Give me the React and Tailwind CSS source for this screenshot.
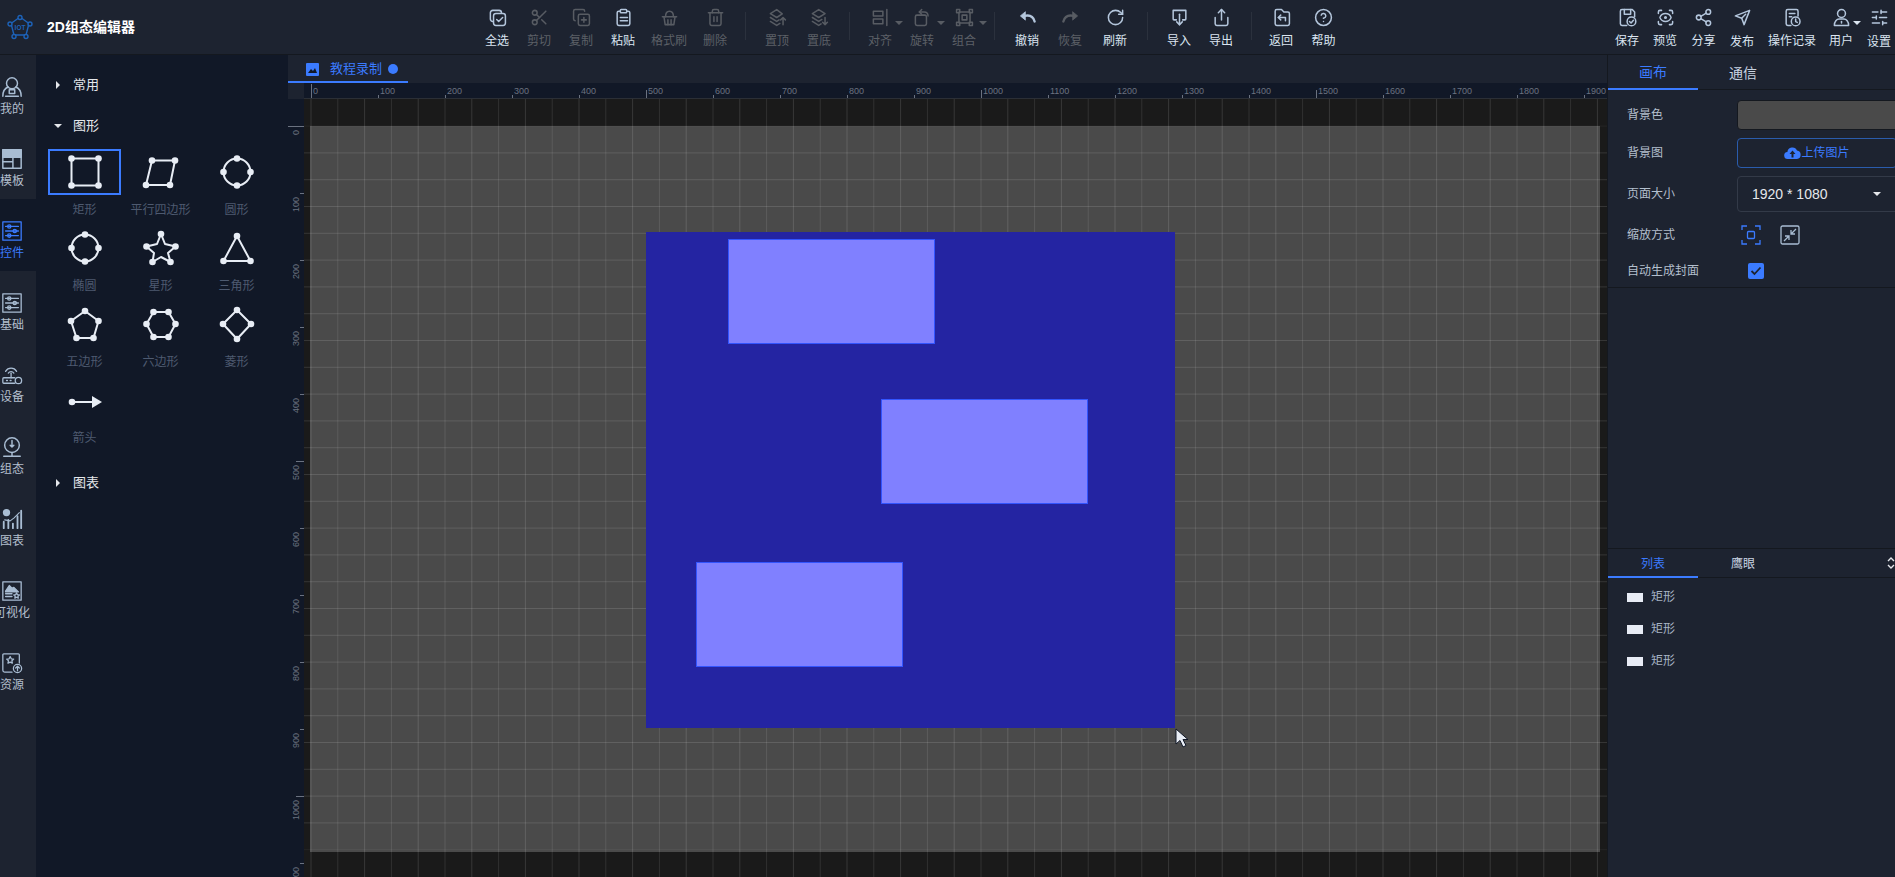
import React from "react";
import { Scissors, CopyPlus, Trash2, RotateCw, Share, CircleHelp, ScanEye, Share2, SlidersHorizontal } from "lucide-react";

const Ic = ({ children, size = 22, sw = 1.6, className = "" }) => (
  <svg width={size} height={size} viewBox="0 0 24 24" fill="none" stroke="currentColor" strokeWidth={sw} strokeLinecap="round" strokeLinejoin="round" className={className}>
    {children}
  </svg>
);
const T = ({ children, sw = 1.9 }) => <Ic size={19} sw={sw}>{children}</Ic>;

const tb = {
  all: <T><path d="M6 17a3 3 0 0 1-3-3V6a3 3 0 0 1 3-3h8a3 3 0 0 1 3 3" /><rect x="7" y="7" width="15" height="15" rx="3" /><path d="m11 14.5 2.5 2.5 5-5" /></T>,
  cut: <Scissors size={19} strokeWidth={1.9} />,
  copy: <CopyPlus size={19} strokeWidth={1.9} />,
  paste: <T><path d="M8 4H6a2 2 0 0 0-2 2v14a2 2 0 0 0 2 2h12a2 2 0 0 0 2-2V6a2 2 0 0 0-2-2h-2" /><rect x="8" y="2" width="8" height="4" rx="1" /><path d="M8 12h9M8 16h9" /></T>,
  brush: <T><path d="M3 11h18" /><path d="M5 11l1.5 10h11L19 11" /><path d="M7 11c0-5 2-7 5-7s5 2 5 7" /><path d="M10 15v6M14 15v6" /></T>,
  del: <Trash2 size={19} strokeWidth={1.9} />,
  top: <T><path d="M11 2 3 7l8 5 7-4.500z" /><path d="M3 12l8 5 3-2" /><path d="M3 17l8 5 4-2.500" /><path d="M19 21v-9m-3 3 3-3 3 3" /></T>,
  bottom: <T><path d="M11 2 3 7l8 5 8-5z" /><path d="M3 12l8 5 4-2.500" /><path d="M3 17l8 5 3-2" /><path d="M19 12v9m-3-3 3 3 3-3" /></T>,
  align: <T><rect x="3" y="4" width="12" height="6" /><rect x="3" y="14" width="12" height="6" /><path d="M20 2v20" /></T>,
  rotate: <T><rect x="3" y="9" width="14" height="13" rx="2" /><path d="M8 5h6c3 0 5 2 5 5" /><path d="m11 2-3 3 3 3" /></T>,
  group: <T><rect x="5" y="5" width="14" height="14" /><rect x="2" y="2" width="4" height="4" /><rect x="18" y="2" width="4" height="4" /><rect x="2" y="18" width="4" height="4" /><rect x="18" y="18" width="4" height="4" /><path d="M9 9h6v6H9z" /></T>,
  undo: <T sw={3}><path d="M9 5 3 10l6 5z" fill="currentColor" strokeWidth={1} /><path d="M8 10c6-1.500 11 0 13 7" /></T>,
  redo: <T sw={3}><path d="M15 5l6 5-6 5z" fill="currentColor" strokeWidth={1} /><path d="M16 10C10 8.500 5 10 3 17" /></T>,
  refresh: <RotateCw size={19} strokeWidth={1.9} />,
  imp: <T><path d="M8 15H5a1 1 0 0 1-1-1V3h16v11a1 1 0 0 1-1 1h-3" /><path d="M12 8v13" /><path d="m8.500 17.500 3.500 3.500 3.500-3.500" /></T>,
  exp: <Share size={19} strokeWidth={1.9} />,
  back: <T><path d="M6 2h6l3 3h5a2 2 0 0 1 2 2v13a2 2 0 0 1-2 2H6a2 2 0 0 1-2-2V4a2 2 0 0 1 2-2z" /><path d="m11 9-3 3 3 3" /><path d="M8 12h9v4" /></T>,
  help: <CircleHelp size={19} strokeWidth={1.9} />,
  save: <T><path d="M11 22H5a2 2 0 0 1-2-2V4a2 2 0 0 1 2-2h13l3 3v6" /><path d="M8 2v6h8V2" /><circle cx="17" cy="17" r="5.500" /><path d="m14.500 17 2 2 3-3.500" /></T>,
  view: <ScanEye size={19} strokeWidth={1.9} />,
  share: <Share2 size={19} strokeWidth={1.9} />,
  publish: <T><path d="M21 3 3 10l8 3 3 8z" /><path d="m11 13 5-5" /></T>,
  log: <T><path d="M10 22H6a2 2 0 0 1-2-2V4a2 2 0 0 1 2-2h11a2 2 0 0 1 2 2v6" /><path d="M8 7h7M8 11h3" /><circle cx="16" cy="17" r="5.500" /><path d="M16 14v3.200l2 1" /></T>,
  user: <T><circle cx="12" cy="7" r="5" /><path d="M3 22c0-5 3-8 6-8h6c3 0 6 3 6 8z" /><path d="M12 17v2" /></T>,
  set: <SlidersHorizontal size={19} strokeWidth={1.9} />,
};

const Caret = ({ className }) => (
  <span className={`absolute w-0 h-0 border-l-[4px] border-r-[4px] border-t-[4px] border-l-transparent border-r-transparent ${className}`} />
);

function Tool({ icon, label, w = "w-[42px]", on = true, caret, lower }) {
  return (
    <div className={`relative flex flex-col items-center shrink-0 pt-[6px] ${w} ${on ? "text-[#b4c6dc]" : "text-[#585c63]"}`}>
      <div className="h-[22px] flex items-center justify-center">{icon}</div>
      <div className={`whitespace-nowrap text-[12px] leading-[16px] mt-[5px] ${lower ? "translate-y-[1px]" : ""} ${on ? "text-[#dbe5f0]" : "text-[#5c6067]"}`}>{label}</div>
      {caret && <Caret className={`top-[21px] right-[-2px] ${on ? "border-t-[#dbe5f0]" : "border-t-[#585c63]"}`} />}
    </div>
  );
}

const Sep = ({ ml, mr }) => <div className={`w-px h-[28px] mt-[12px] bg-[#2b313d] shrink-0 ${ml} ${mr}`} />;

function Logo() {
  return (
    <svg width="26" height="26" viewBox="0 0 26 26" fill="none" stroke="#1d62b8" strokeWidth="1.4">
      <path d="M13 3 22 9.500 19 21H7L4 9.500z" />
      <circle cx="13" cy="3.500" r="2" fill="#1d2330" />
      <circle cx="3" cy="10" r="2" fill="#1d2330" />
      <circle cx="23" cy="10" r="2" fill="#1d2330" />
      <circle cx="7" cy="22.500" r="2" fill="#1d2330" />
      <circle cx="19" cy="22.500" r="2" fill="#1d2330" />
      <text x="13" y="15.500" textAnchor="middle" fontSize="6.500" fontWeight="700" fill="#1d62b8" stroke="none" fontFamily="Liberation Sans">IOT</text>
    </svg>
  );
}

function Header() {
  return (
    <header className="h-[55px] shrink-0 flex bg-[#1d2330] border-b border-[#14181f] overflow-hidden">
      <div className="w-[476px] shrink-0 flex items-center pl-[7px]">
        <Logo />
        <span className="ml-[14px] text-[14px] font-bold text-white">2D组态编辑器</span>
      </div>
      <Tool icon={tb.all} label="全选" />
      <Tool icon={tb.cut} label="剪切" on={false} />
      <Tool icon={tb.copy} label="复制" on={false} />
      <Tool icon={tb.paste} label="粘贴" />
      <Tool icon={tb.brush} label="格式刷" on={false} w="w-[50px]" />
      <Tool icon={tb.del} label="删除" on={false} w="w-[42px]" />
      <Sep ml="ml-[9px]" mr="mr-[10px]" />
      <Tool icon={tb.top} label="置顶" on={false} />
      <Tool icon={tb.bottom} label="置底" on={false} />
      <Sep ml="ml-[9px]" mr="mr-[9px]" />
      <Tool icon={tb.align} label="对齐" on={false} caret />
      <Tool icon={tb.rotate} label="旋转" on={false} caret />
      <Tool icon={tb.group} label="组合" on={false} caret />
      <Sep ml="ml-[9px]" mr="mr-[11px]" />
      <Tool icon={tb.undo} label="撤销" />
      <Tool icon={tb.redo} label="恢复" on={false} w="w-[44px]" />
      <Tool icon={tb.refresh} label="刷新" w="w-[46px]" />
      <Sep ml="ml-[9px]" mr="mr-[10px]" />
      <Tool icon={tb.imp} label="导入" />
      <Tool icon={tb.exp} label="导出" />
      <Sep ml="ml-[9px]" mr="mr-[8px]" />
      <Tool icon={tb.back} label="返回" />
      <Tool icon={tb.help} label="帮助" w="w-[43px]" />
      <div className="w-[263px] shrink-0" />
      <Tool icon={tb.save} label="保存" w="w-[38px]" />
      <Tool icon={tb.view} label="预览" w="w-[38px]" />
      <Tool icon={tb.share} label="分享" w="w-[39px]" />
      <Tool icon={tb.publish} label="发布" w="w-[38px]" lower />
      <Tool icon={tb.log} label="操作记录" w="w-[62px]" />
      <Tool icon={tb.user} label="用户" w="w-[36px]" caret />
      <Tool icon={tb.set} label="设置" w="w-[40px]" lower />
    </header>
  );
}

const nav = [
  ["我的", <Ic><circle cx="12" cy="8" r="6" /><path d="M2 22c0-6 3-9 6-10M22 22c0-6-3-9-6-10" /><path d="M5 22h14" /><rect x="9" y="15" width="6" height="4" /></Ic>],
  ["模板", <Ic><rect x="2" y="2" width="20" height="8" fill="currentColor" /><rect x="2" y="2" width="20" height="20" /><path d="M13 10v12M2 15h11" /></Ic>],
  ["控件", <Ic sw={1.4}><rect x="2" y="2" width="20" height="20" /><path d="M5 7h14M5 12h14M5 17h14" /><circle cx="9" cy="7" r="1.800" /><circle cx="15" cy="12" r="1.800" /><circle cx="9" cy="17" r="1.800" /></Ic>],
  ["基础", <Ic sw={1.4}><rect x="2" y="2" width="20" height="20" /><path d="M5 7h14M5 12h14M5 17h14" /><circle cx="9" cy="7" r="1.800" /><circle cx="15" cy="12" r="1.800" /><circle cx="9" cy="17" r="1.800" /></Ic>],
  ["设备", <Ic sw={1.4}><path d="M5 8a7 7 0 0 1 12 0M8 10a3.500 3.500 0 0 1 6 0" /><path d="M11 10v5" /><path d="M15 21H3a1 1 0 0 1-1-1v-4a1 1 0 0 1 1-1h12" /><circle cx="19" cy="18" r="3.500" /><path d="M6 18h1M10 18h1" /></Ic>],
  ["组态", <Ic sw={1.6}><circle cx="12" cy="10" r="8" /><path d="M12 5v7m-2-2 2 2 2-2" /><path d="M3 22h18M12 18v4" /></Ic>],
  ["图表", <Ic sw={2}><circle cx="6" cy="5" r="3" fill="currentColor" /><path d="M3 22v-7M8 22v-9M13 22v-5M18 22V9M22 22V3" /><path d="M4 13 10 14l4-3 6-6" strokeWidth={1.2} /></Ic>],
  ["可视化", <Ic sw={1.4}><rect x="2" y="2" width="20" height="20" /><path d="m5 12 4-6 3 3 2-1 5 5H5z" fill="currentColor" /><path d="M5 15h7M5 18h7" /><path d="m17 14 1 2 2 .3-1.500 1.500.4 2-1.900-1-1.900 1 .4-2-1.500-1.500 2-.3z" /></Ic>],
  ["资源", <Ic sw={1.4}><path d="M12 22H4a2 2 0 0 1-2-2V3a1 1 0 0 1 1-1h16a1 1 0 0 1 1 1v9" /><path d="m10 5 1.200 2.400 2.600.4-1.900 1.800.5 2.600-2.400-1.200-2.400 1.200.5-2.600L6.200 7.800l2.600-.4z" /><circle cx="18" cy="18" r="4.500" /><path d="M18 20.500v-5m-2 2 2-2 2 2" /></Ic>],
];

function Nav() {
  return (
    <nav className="w-[36px] shrink-0 bg-[#1d2330] overflow-hidden">
      <div className="w-[36px]">
        {nav.map(([label, icon]) => {
          const active = label === "控件";
          return (
            <div key={label} className={`h-[72px] w-[36px] pt-[21px] ${active ? "bg-[#111827]" : ""}`}>
              <div className="w-[24px] flex flex-col items-center">
                <div className={`h-[22px] ${active ? "text-[#3b7bff]" : "text-[#a9bdd3]"}`}>{icon}</div>
                <div className={`whitespace-nowrap text-[12px] leading-[16px] mt-[3px] ${active ? "text-[#3b7bff]" : "text-[#b3bfcd]"}`}>{label}</div>
              </div>
            </div>
          );
        })}
      </div>
    </nav>
  );
}

const Dots = ({ pts }) => pts.map(([x, y], i) => <circle key={i} cx={x} cy={y} r="3.300" fill="#e8edf5" />);

function Poly({ pts, dots }) {
  return (
    <svg width="40" height="40" viewBox="-20 -20 40 40" fill="none">
      <polygon points={pts.map((p) => p.join(",")).join(" ")} stroke="#e8edf5" strokeWidth="2" strokeLinejoin="round" />
      <Dots pts={dots || pts} />
    </svg>
  );
}

function Circ() {
  const d = [[0, -13.5], [13.5, 0], [0, 13.5], [-13.5, 0]];
  return (
    <svg width="40" height="40" viewBox="-20 -20 40 40" fill="none">
      <circle r="13.500" stroke="#e8edf5" strokeWidth="2" />
      <Dots pts={d} />
    </svg>
  );
}

const starOuter = [[0, -14], [14.5, -1.5], [9.5, 14], [-8.5, 14], [-14.5, -1.5]];
const starPts = [[0, -14], [4, -4], [14.5, -1.5], [7, 5], [9.5, 14], [0, 9], [-8.5, 14], [-7, 5], [-14.5, -1.5], [-4, -4]];

const shapes = [
  ["矩形", <Poly pts={[[-13.5, -13.5], [13.5, -13.5], [13.5, 13.5], [-13.5, 13.5]]} />, true],
  ["平行四边形", <Poly pts={[[-9, -11.5], [14, -11.5], [9, 13], [-15, 13]]} />],
  ["圆形", <Circ />],
  ["椭圆", <Circ />],
  ["星形", <Poly pts={starPts} dots={starOuter} />],
  ["三角形", <Poly pts={[[0, -12], [13.5, 13], [-13.5, 13]]} />],
  ["五边形", <Poly pts={[[0, -13], [13.5, -3], [8.5, 14], [-8.5, 14], [-14, -3]]} />],
  ["六边形", <Poly pts={[[-7.5, -12], [7.5, -12], [14.5, 0], [7.5, 13], [-7.5, 13], [-14.5, 0]]} />],
  ["菱形", <Poly pts={[[0, -14], [14, 0], [0, 15], [-14, 0]]} />],
  ["箭头", (
    <svg width="40" height="40" viewBox="-20 -20 40 40" fill="none" className="translate-y-[2px]">
      <path d="M-13 0H8" stroke="#e8edf5" strokeWidth="2" />
      <circle cx="-13" cy="0" r="3.300" fill="#e8edf5" />
      <path d="M7-6 17 0 7 6z" fill="#e8edf5" />
    </svg>
  )],
];

const Tri = ({ down }) =>
  down ? (
    <span className="w-0 h-0 border-l-[4px] border-r-[4px] border-t-[4px] border-l-transparent border-r-transparent border-t-[#e5e7eb]" />
  ) : (
    <span className="w-0 h-0 ml-[2px] border-t-[4px] border-b-[4px] border-l-[4px] border-t-transparent border-b-transparent border-l-[#e5e7eb]" />
  );

const Section = ({ label, down }) => (
  <div className="h-[41px] flex items-center pl-[18px] text-[13px] text-[#e5e7eb]">
    <span className="w-[19px] flex"><Tri down={down} /></span>
    <span>{label}</span>
  </div>
);

function Panel() {
  return (
    <aside className="w-[252px] shrink-0 bg-[#111827] pt-[9px] overflow-hidden">
      <Section label="常用" />
      <Section label="图形" down />
      <div className="mt-[3px] ml-[10.5px] grid grid-cols-[repeat(3,76px)]">
        {shapes.map(([label, icon, sel]) => (
          <div key={label} className="h-[76px] flex flex-col items-center">
            <div className={`w-[73px] h-[46px] flex items-center justify-center border-2 ${sel ? "border-[#3b7bff]" : "border-transparent"}`}>{icon}</div>
            <div className="mt-[7px] text-[12px] leading-[16px] text-[#4e5a70] whitespace-nowrap">{label}</div>
          </div>
        ))}
      </div>
      <div className="mt-[9px]">
        <Section label="图表" />
      </div>
    </aside>
  );
}

const range = (n) => Array.from({ length: n }, (_, i) => i);
const K = 0.67;

function TopRuler() {
  return (
    <svg width="1303" height="16" className="block shrink-0 bg-[#111827]">
      {range(20).map((i) => {
        const x = 6.5 + i * 100 * K;
        const big = i % 5 === 0;
        const h = i === 0 ? 15 : big ? 9 : 4;
        return (
          <g key={i}>
            <rect x={Math.round(x)} y={16 - h} width="1" height={h} fill="#6b7280" />
            <text x={Math.round(x) + 2} y="11" fontSize="9" fill="#6b7280" fontFamily="Liberation Sans">{i * 100}</text>
          </g>
        );
      })}
      <rect y="15" width="1303" height="1" fill="#2b2f36" />
    </svg>
  );
}

function LeftRuler() {
  return (
    <svg width="16" height="778" className="block shrink-0 bg-[#111827]">
      {range(12).map((i) => {
        const y = 27 + i * 100 * K;
        const big = i % 5 === 0;
        const w = i === 0 ? 16 : big ? 8 : 4;
        return (
          <g key={i}>
            <rect x={16 - w} y={Math.round(y)} width={w} height="1" fill="#6b7280" />
            <text x="11" y={Math.round(y) + 4} fontSize="9" fill="#6b7280" fontFamily="Liberation Sans" textAnchor="end" transform={`rotate(-90 11 ${Math.round(y) + 4})`}>{i * 100}</text>
          </g>
        );
      })}
    </svg>
  );
}

function Grid() {
  return (
    <svg width="1303" height="778" className="absolute inset-0">
      {range(49).map((i) => (
        <rect key={i} x={6.5 + i * 26.8} y="0" width="1" height="778" fill="#fff" opacity={i % 2 ? 0.1 : 0.13} />
      ))}
      {range(28).map((i) => (
        <rect key={i} x="0" y={26.6 + i * 26.8} width="1303" height="1" fill="#fff" opacity={i === 0 || i === 27 ? 0.05 : 0.12} />
      ))}
    </svg>
  );
}

const Box = ({ className }) => <div className={`absolute w-[207px] h-[105px] bg-[#8080ff] border border-[#3355ff] ${className}`} />;

function Canvas() {
  return (
    <div className="relative flex-1 bg-[#1a1a1a] overflow-hidden">
      <div className="absolute left-[6px] top-[27px] w-[1290px] h-[726px] bg-[#4a4a4a]" />
      <Grid />
      <div className="absolute left-[342px] top-[133px] w-[529px] h-[496px] bg-[#2424a2]" />
      <Box className="left-[424px] top-[140px]" />
      <Box className="left-[577px] top-[300px]" />
      <Box className="left-[392px] top-[463px]" />
      <svg width="13" height="20" viewBox="0 0 13 20" className="absolute left-[871px] top-[629px]">
        <path d="M1 1v15l4-3.500 3 6.500 3-1.500-3-6h5z" fill="#e8edf5" stroke="#111827" strokeWidth="1" />
      </svg>
    </div>
  );
}

function Center() {
  return (
    <main className="w-[1319px] shrink-0 flex flex-col min-h-0">
      <div className="h-[28px] shrink-0 bg-[#1d2330] flex">
        <div className="w-[120px] h-[28px] border-b-2 border-[#3b7bff] flex items-center pl-[18px] pt-[2px] text-[#3b7bff]">
          <svg width="13" height="13" viewBox="0 0 13 13"><rect width="13" height="13" rx="1" fill="#3b7bff" /><path d="M2 10l3-4 2 2 2-3 2 5z" fill="#111827" /></svg>
          <span className="ml-[11px] text-[13px] leading-[16px]">教程录制</span>
          <span className="ml-[6px] w-[10px] h-[10px] rounded-full bg-[#3b7bff]" />
        </div>
      </div>
      <div className="h-[16px] shrink-0 flex">
        <div className="w-[16px] bg-[#1d2330]" />
        <TopRuler />
      </div>
      <div className="flex-1 flex min-h-0">
        <LeftRuler />
        <Canvas />
      </div>
    </main>
  );
}

const Row = ({ label, h, children }) => (
  <div className={`flex items-center ${h}`}>
    <div className="w-[129px] shrink-0 pl-[19px] text-[12px] text-[#b3bfcd] whitespace-nowrap">{label}</div>
    {children}
  </div>
);

function RightPanel() {
  return (
    <aside className="w-[288px] shrink-0 bg-[#1d2330] border-l border-[#14181f] flex flex-col overflow-hidden">
      <div className="h-[35px] shrink-0 flex border-b border-[#14181f] text-[14px]">
        <div className="w-[90px] h-[35px] border-b-2 border-[#3b7bff] text-[#3b7bff] flex items-center justify-center pt-[2px]">画布</div>
        <div className="w-[90px] h-[34px] text-[#c9d4e2] flex items-center justify-center pt-[2px]">通信</div>
      </div>
      <div className="h-[198px] shrink-0 border-b border-[#14181f] pt-[10px] w-[320px]">
        <Row label="背景色" h="h-[30px]">
          <div className="w-[170px] h-[30px] rounded-[4px] bg-[#4a4a4a] border border-[#14181f]" />
        </Row>
        <Row label="背景图" h="h-[30px] mt-[8px]">
          <div className="w-[160px] h-[30px] rounded-[4px] border border-[#2a5cad] flex items-center justify-center text-[12px] text-[#3b7bff]">
            <svg width="17" height="14" viewBox="0 0 17 14"><path d="M4 13a3.500 3.500 0 0 1-.6-7A5 5 0 0 1 13 4.500 4.300 4.300 0 0 1 13 13z" fill="#3b7bff" /><path d="M8.500 4.500 5.500 8h2v3.500h2V8h2z" fill="#1d2330" /></svg>
            <span>上传图片</span>
          </div>
        </Row>
        <Row label="页面大小" h="h-[36px] mt-[8px]">
          <div className="relative w-[170px] h-[36px] rounded-[4px] border border-[#333a48] flex items-center pl-[14px] text-[14px] text-[#e5e7eb]">
            1920 * 1080
            <Caret className="left-[135px] top-[15px] border-t-[#e5e7eb]" />
          </div>
        </Row>
        <Row label="缩放方式" h="h-[22px] mt-[12px]">
          <svg width="20" height="20" viewBox="0 0 20 20" fill="none" stroke="#3b7bff" strokeWidth="1.300" className="ml-[4px]">
            <path d="M1 5V1h5M14 1h5v4M19 15v4h-5M6 19H1v-4" /><rect x="6.500" y="6.500" width="7" height="7" rx="1" />
          </svg>
          <svg width="20" height="20" viewBox="0 0 20 20" fill="none" stroke="#a9bdd3" strokeWidth="1.300" className="ml-[19px]">
            <rect x="1" y="1" width="18" height="18" rx="1.500" /><path d="M11 9l5-5M11 5v4h4M9 11l-5 5M5 11h4v4" />
          </svg>
        </Row>
        <Row label="自动生成封面" h="h-[16px] mt-[17px]">
          <div className="ml-[11px] w-[16px] h-[16px] rounded-[2px] bg-[#3b7bff] flex items-center justify-center">
            <svg width="12" height="12" viewBox="0 0 12 12" fill="none" stroke="#1d2330" strokeWidth="1.800"><path d="m1.500 6 3 3 6-6.500" /></svg>
          </div>
        </Row>
      </div>
      <div className="h-[261px] shrink-0 border-b border-[#14181f]" />
      <div className="h-[29px] shrink-0 flex border-b border-[#14181f] text-[12px] relative">
        <div className="w-[90px] h-[29px] border-b-2 border-[#3b7bff] text-[#3b7bff] flex items-center justify-center pt-[2px]">列表</div>
        <div className="w-[90px] h-[28px] text-[#c9d4e2] flex items-center justify-center pt-[2px]">鹰眼</div>
        <svg width="8" height="14" viewBox="0 0 8 14" fill="none" stroke="#e5e7eb" strokeWidth="1.400" className="absolute left-[279px] top-[7px]"><path d="M1 5l3-3 3 3M1 9l3 3 3-3" /></svg>
      </div>
      <div className="pt-[3px]">
        {range(3).map((i) => (
          <div key={i} className="h-[32px] flex items-center pl-[19px]">
            <div className="w-[16px] h-[9px] bg-[#e8ecf5]" />
            <span className="ml-[8px] text-[12px] text-[#a7b4c4]">矩形</span>
          </div>
        ))}
      </div>
    </aside>
  );
}

export default function App() {
  return (
    <div className="w-[1895px] h-[877px] flex flex-col overflow-hidden bg-[#111827] font-['Liberation_Sans','Noto_Sans_CJK_SC',sans-serif]">
      <Header />
      <div className="flex-1 flex min-h-0">
        <Nav />
        <Panel />
        <Center />
        <RightPanel />
      </div>
    </div>
  );
}
